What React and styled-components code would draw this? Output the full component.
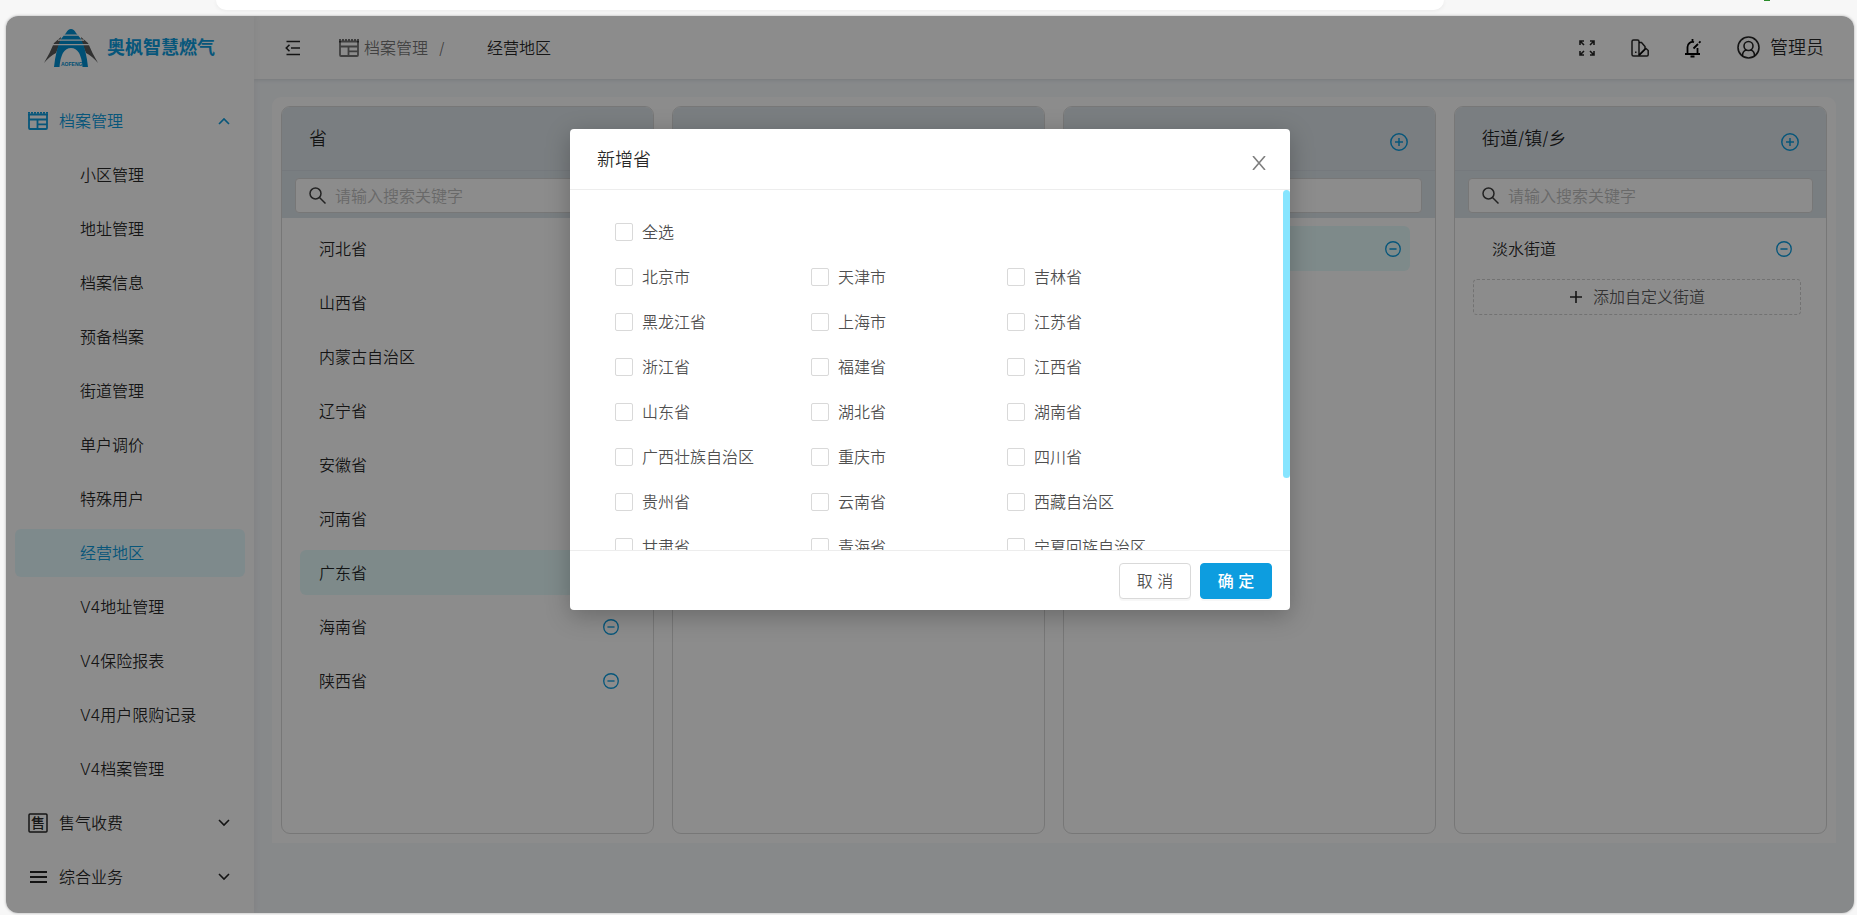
import React, { useState } from 'react'
import styled, { createGlobalStyle } from 'styled-components'

const GlobalStyle = createGlobalStyle`
    *, *::before, *::after{
        box-sizing: border-box;
    }
    html, body, #root{
        height: 100%;
    }
    body{
        margin: 0;
        overflow: hidden;
        background: #f7f7f7;
        font-family: Inter, "Noto Sans CJK SC", sans-serif;
        font-size: 16px;
        font-weight: 350;
        line-height: 24px;
        color: #000000d9;
    }
    button, input{
        font: inherit;
        color: inherit;
    }
    button{
        padding: 0;
        border: 0;
        background: none;
        cursor: pointer;
    }
    ul{
        margin: 0;
        padding: 0;
        list-style: none;
    }
    svg{
        display: block;
    }
`;

const Browser = styled.div`
    display: flex;
    flex-direction: column;
    height: 100vh;
    padding: 0 3px 2px 6px;
`;

const Toolbar = styled.div`
    display: flex;
    justify-content: space-between;
    flex: none;
    height: 16px;
    padding: 0 84px 0 210px;
`;

const AddressBar = styled.div`
    width: 79%;
    height: 10px;
    background: white;
    border-radius: 0 0 24px 24px;
    box-shadow: 0 1px 4px rgba(0,0,0,0.06);
`;

const StatusDot = styled.span`
    width: 6px;
    height: 1px;
    background: #2a8c2a;
`;

const Window = styled.div`
    position: relative;
    display: flex;
    flex: 1;
    min-height: 0;
    overflow: hidden;
    border-radius: 12px;
    background: #f6f9fc;
    box-shadow: 0 0 3px rgba(0,0,0,0.3);
`;

const Sidebar = styled.aside`
    display: flex;
    flex-direction: column;
    flex: none;
    width: 248px;
    background: white;
    box-shadow: 1px 0 6px rgba(0,21,41,0.06);
    z-index: 1;
`;

const Brand = styled.a`
    display: flex;
    align-items: center;
    gap: 9px;
    height: 63px;
    padding-left: 38px;
    color: #0d9ddf;
    font-size: 18px;
    font-weight: 700;
    text-decoration: none;
`;

const Menu = styled.nav`
    display: flex;
    flex-direction: column;
    gap: 6px;
    padding: 18px 9px 0;
`;

const MenuGroup = styled.button`
    display: flex;
    align-items: center;
    gap: 11px;
    height: 48px;
    padding: 0 15px 0 13px;
    color: ${p => p.$open ? '#0d9ddf' : 'inherit'};
    text-align: left;
`;

const GroupName = styled.span`
    flex: 1;
`;

const MenuItem = styled.a`
    display: flex;
    align-items: center;
    height: 48px;
    padding-left: 65px;
    border-radius: 6px;
    color: ${p => p.$active ? '#0d9ddf' : '#000000d9'};
    background: ${p => p.$active ? '#e6fbff' : 'none'};
    text-decoration: none;
`;

const Main = styled.div`
    display: flex;
    flex-direction: column;
    flex: 1;
    min-width: 0;
`;

const Header = styled.header`
    display: flex;
    align-items: center;
    justify-content: space-between;
    flex: none;
    height: 63px;
    padding: 0 30px 0 31px;
    background: white;
    box-shadow: 0 1px 4px rgba(0,21,41,0.12);
`;

const HeaderSide = styled.div`
    display: flex;
    align-items: center;
    gap: 35px;
`;

const Crumbs = styled.div`
    display: flex;
    align-items: center;
    gap: 5px;
    padding-left: 3px;
`;

const Crumb = styled.a`
    display: flex;
    align-items: center;
    gap: 5px;
    color: #0000008c;
    text-decoration: none;
`;

const Slash = styled.span`
    width: 43px;
    margin-left: 6px;
    color: #0000008c;
`;

const User = styled.button`
    display: flex;
    align-items: center;
    gap: 10px;
    font-size: 18px;
`;

const Content = styled.main`
    padding: 18px;
`;

const Board = styled.div`
    display: grid;
    grid-template-columns: repeat(4, minmax(0, 1fr));
    gap: 18px;
    padding: 9px;
    border-radius: 9px 9px 0 0;
    background: white;
`;

const Column = styled.section`
    height: calc(100vh - 187px);
    min-height: 500px;
    border: 1px solid #d9d9d9;
    border-radius: 9px;
    overflow: hidden;
`;

const ColumnHead = styled.div`
    display: flex;
    align-items: center;
    justify-content: space-between;
    height: 64px;
    padding: 0 27px;
    border-bottom: 1px solid #d5dde3;
    background: #dfe6eb;
`;

const Title = styled.h2`
    margin: 0;
    padding-top: 1px;
    font-size: 18px;
    font-weight: 350;
`;

const SearchArea = styled.div`
    padding: 7px 13px 5px;
    background: #dde5eb;
`;

const SearchBox = styled.label`
    display: flex;
    align-items: center;
    gap: 9px;
    height: 35px;
    padding: 0 13px;
    border: 1px solid #d9d9d9;
    border-radius: 4px;
    background: white;
`;

const SearchInput = styled.input`
    flex: 1;
    min-width: 0;
    padding: 0;
    border: 0;
    outline: 0;
    background: none;
    &::placeholder{
        color: #bfbfbf;
        opacity: 1;
    }
`;

const List = styled.ul`
    display: flex;
    flex-direction: column;
    gap: 9px;
    padding: 8px 25px 0 18px;
`;

const Region = styled.li`
    display: flex;
    align-items: center;
    justify-content: space-between;
    height: 45px;
    padding: 0 9px 0 19px;
    border-radius: 6px;
    background: ${p => p.$active ? '#e6fbfc' : 'none'};
`;

const RoundButton = styled.button`
    color: #0d9ddf;
`;

const AddButton = styled(RoundButton)`
    padding-top: 6px;
`;

const AddCustom = styled.button`
    display: flex;
    align-items: center;
    justify-content: center;
    gap: 10px;
    width: calc(100% - 43px);
    height: 36px;
    margin: 8px 0 0 18px;
    border: 1px dashed #d0d0d0;
    border-radius: 4px;
    color: #000000a6;
`;

const Mask = styled.div`
    position: absolute;
    inset: 0;
    display: flex;
    justify-content: center;
    align-items: flex-start;
    padding-top: 113px;
    background: rgba(0,0,0,0.45);
    z-index: 2;
`;

const Modal = styled.div`
    width: 720px;
    border-radius: 4px;
    background: white;
    box-shadow: 0 6px 24px rgba(0,0,0,0.25);
`;

const ModalHead = styled.div`
    display: flex;
    align-items: center;
    justify-content: space-between;
    height: 61px;
    padding: 0 24px 0 27px;
    border-bottom: 1px solid #ededed;
`;

const CloseButton = styled.button`
    padding-top: 8px;
    color: #00000080;
`;

const ModalBody = styled.div`
    position: relative;
`;

const ScrollArea = styled.div`
    height: 360px;
    padding: 19px 45px 0;
    overflow-y: auto;
    scrollbar-width: none;
`;

const Thumb = styled.div`
    position: absolute;
    top: 0;
    right: 0;
    width: 7px;
    height: 80%;
    border-radius: 4px;
    background: #87e5ff;
`;

const Options = styled.div`
    display: grid;
    grid-template-columns: repeat(3, 196px);
    grid-auto-rows: 45px;
    align-items: center;
    padding-bottom: 26px;
`;

const Option = styled.label`
    display: flex;
    align-items: center;
    gap: 9px;
    grid-column: ${p => p.$all ? '1 / -1' : 'auto'};
    color: #000000b3;
`;

const Checkbox = styled.input`
    appearance: none;
    width: 18px;
    height: 18px;
    margin: 0;
    border: 1px solid #d9d9d9;
    border-radius: 2px;
    background: white;
    &:checked{
        border-color: #0d9ddf;
        background: #0d9ddf;
    }
`;

const ModalFoot = styled.div`
    display: flex;
    justify-content: flex-end;
    gap: 9px;
    padding: 12px 18px 11px;
    border-top: 1px solid #ededed;
`;

const FootButton = styled.button`
    width: 72px;
    height: 36px;
    border: 1px solid ${p => p.$primary ? '#0d9ddf' : '#d9d9d9'};
    border-radius: 4px;
    background: ${p => p.$primary ? '#0d9ddf' : 'white'};
    color: ${p => p.$primary ? 'white' : '#000000b3'};
    font-weight: ${p => p.$primary ? 500 : 350};
    box-shadow: 0 2px 0 rgba(0,0,0,0.03);
`;

const Logo = () => (
    <svg width="54" height="38" viewBox="0 0 54 38">
        <path d="M17 8L10 14Q6 24 0 34Q6 27 12 24L16 14ZM37 8L44 14Q48 24 54 34Q48 27 42 24L38 14Z" fill="#595959" />
        <path d="M27 0Q30 0 32 4L37 10Q42 20 44 38H38.500Q37 19 27 19Q17 19 15.500 38H10Q12 20 17 10L22 4Q24 0 27 0Z" fill="#0090d3" />
        <path d="M20 6.200H34M14 11.200H40M9 15.700H45" stroke="white" strokeWidth="1.2" />
        <text x="17" y="37" fontSize="5" fontWeight="700" fontFamily="Liberation Sans" fill="#0090d3">AOFENG</text>
    </svg>
)

const ArchiveIcon = () => (
    <svg width="20" height="18" viewBox="0 0 20 18" fill="none" stroke="currentColor" strokeWidth="1.8">
        <path d="M1 2V16a1 1 0 0 0 1 1h16a1 1 0 0 0 1-1V2M1 7.500h18M9.500 7.500V17M9.500 12.300H19" />
        <path d="M0 2.500h20" strokeWidth="1.8" />
        <path d="M0 .900h20" strokeWidth="1.6" strokeDasharray="2 1" />
    </svg>
)

const SellIcon = () => (
    <svg width="20" height="20" viewBox="0 0 20 20">
        <rect x="1" y="1" width="18" height="18" rx="1" fill="none" stroke="currentColor" strokeWidth="1.5" />
        <text x="10" y="15" textAnchor="middle" fontSize="14" fontWeight="500" fill="currentColor">售</text>
    </svg>
)

const LinesIcon = () => (
    <svg width="20" height="14" viewBox="0 0 20 14" stroke="currentColor" strokeWidth="2">
        <path d="M2 2h17M2 7h17M2 12h17" />
    </svg>
)

const Chevron = ({up}) => (
    <svg width="12" height="8" viewBox="0 0 12 8" fill="none" stroke="currentColor" strokeWidth="1.6">
        <path d={up ? 'M1 7l5-5 5 5' : 'M1 1l5 5 5-5'} />
    </svg>
)

const FoldIcon = () => (
    <svg width="16" height="16" viewBox="0 0 16 16" fill="none" stroke="currentColor" strokeWidth="1.6">
        <path d="M1.500 1.500H15M6 8H15M1.500 14.500H15M4.500 4.800L1.300 8l3.200 3.200" />
    </svg>
)

const FullIcon = () => (
    <svg width="18" height="18" viewBox="0 0 18 18" fill="none" stroke="currentColor" strokeWidth="1.6">
        <path d="M2 6V2h4M2 2l4 4M12 2h4v4M16 2l-4 4M2 12v4h4M2 16l4-4M12 16h4v-4M16 16l-4-4" />
    </svg>
)

const SwatchIcon = () => (
    <svg width="18" height="18" viewBox="0 0 18 18" fill="none" stroke="currentColor" strokeWidth="1.5">
        <path d="M7.500 17H2.500A1.500 1.500 0 0 1 1 15.500v-13A1.500 1.500 0 0 1 2.500 1h4A1.500 1.500 0 0 1 8 2.500V17h8a1.200 1.200 0 0 0 1.200-1.200v-4.300L15 9.500l-7 7" />
        <path d="M8 3.500h2.500L14 7.500v2.500M8 16l6-6" />
        <path d="M4 13.200h1.500" />
    </svg>
)

const BellIcon = () => (
    <svg width="18" height="20" viewBox="0 0 18 20" fill="none" stroke="#000000" strokeWidth="1.8">
        <path d="M1 16h15M3.500 16V9a5 5 0 0 1 6.500-4.800M13.500 10v6M8.500 1v3M9.500 10.500l4.500-4.500M15 4.800l1.500-1.500" />
        <path d="M6.500 18.500h4" strokeWidth="2" />
    </svg>
)

const UserIcon = () => (
    <svg width="23" height="23" viewBox="0 0 23 23" fill="none" stroke="currentColor" strokeWidth="1.6">
        <circle cx="11.500" cy="11.500" r="10.500" />
        <circle cx="11.500" cy="10" r="4.500" />
        <path d="M5.500 19.500c0-3 2-5 4-5.500M17.500 19.500c0-3-2-5-4-5.500" />
    </svg>
)

const SearchIcon = () => (
    <svg width="17" height="17" viewBox="0 0 17 17" fill="none" stroke="#404040" strokeWidth="1.5">
        <circle cx="6.500" cy="6.500" r="5.500" />
        <path d="M10.500 10.500l6 6" />
    </svg>
)

const CircleIcon = ({size, plus}) => (
    <svg width={size} height={size} viewBox="0 0 18 18" fill="none" stroke="currentColor" strokeWidth="1.5">
        <circle cx="9" cy="9" r="8.200" />
        <path d={plus ? 'M5 9h8M9 5v8' : 'M5 9h8'} />
    </svg>
)

const PlusIcon = () => (
    <svg width="14" height="14" viewBox="0 0 14 14" stroke="#000000d9" strokeWidth="1.6">
        <path d="M1 7h12M7 1v12" />
    </svg>
)

const CloseIcon = () => (
    <svg width="14" height="14" viewBox="0 0 14 14" fill="none" stroke="currentColor" strokeWidth="1.6">
        <path d="M1 0l12 14M13 0L1 14" />
    </svg>
)

const menuItems = [
    '小区管理', '地址管理', '档案信息', '预备档案', '街道管理', '单户调价',
    '特殊用户', '经营地区', 'V4地址管理', 'V4保险报表', 'V4用户限购记录', 'V4档案管理',
]

const columns = [
    {
        title: '省',
        active: '广东省',
        items: ['河北省', '山西省', '内蒙古自治区', '辽宁省', '安徽省', '河南省', '广东省', '海南省', '陕西省'],
    },
    {title: '市', active: '惠州市', items: ['惠州市']},
    {title: '区/县', active: '惠阳区', items: ['惠阳区']},
    {title: '街道/镇/乡', items: ['淡水街道'], custom: '添加自定义街道'},
]

const provinces = [
    '北京市', '天津市', '吉林省', '黑龙江省', '上海市', '江苏省', '浙江省', '福建省', '江西省',
    '山东省', '湖北省', '湖南省', '广西壮族自治区', '重庆市', '四川省', '贵州省', '云南省', '西藏自治区',
    '甘肃省', '青海省', '宁夏回族自治区', '新疆维吾尔自治区', '台湾省', '香港特别行政区',
]

const RegionColumn = ({data}) => (
    <Column>
        <ColumnHead>
            <Title>{data.title}</Title>
            <AddButton aria-label={'新增' + data.title}><CircleIcon size={18} plus /></AddButton>
        </ColumnHead>
        <SearchArea>
            <SearchBox>
                <SearchIcon />
                <SearchInput type="text" aria-label={data.title} placeholder="请输入搜索关键字" />
            </SearchBox>
        </SearchArea>
        <List>
            {data.items.map(e => (
                <Region key={e} $active={e === data.active}>
                    {e}
                    <RoundButton aria-label={'删除' + e}><CircleIcon size={16} /></RoundButton>
                </Region>
            ))}
        </List>
        {data.custom && <AddCustom><PlusIcon />{data.custom}</AddCustom>}
    </Column>
)

export default function App(){
    const [checked, setChecked] = useState([])
    const [open, setOpen] = useState(true)
    const [scroll, setScroll] = useState(0)

    const toggle = (name) => {
        setChecked(checked.includes(name) ? checked.filter(e => e !== name) : [...checked, name])
    }

    const toggleAll = (e) => {
        setChecked(e.target.checked ? provinces : [])
    }

    const onScroll = (e) => {
        const {scrollTop, clientHeight, scrollHeight} = e.target
        setScroll(scrollTop * clientHeight / scrollHeight)
    }

    return(
        <Browser>
            <GlobalStyle />
            <Toolbar>
                <AddressBar />
                <StatusDot />
            </Toolbar>
            <Window>
                <Sidebar>
                    <Brand href="#"><Logo />奥枫智慧燃气</Brand>
                    <Menu>
                        <MenuGroup $open><ArchiveIcon /><GroupName>档案管理</GroupName><Chevron up /></MenuGroup>
                        {menuItems.map(e => (
                            <MenuItem key={e} href="#" $active={e === '经营地区'}>{e}</MenuItem>
                        ))}
                        <MenuGroup><SellIcon /><GroupName>售气收费</GroupName><Chevron /></MenuGroup>
                        <MenuGroup><LinesIcon /><GroupName>综合业务</GroupName><Chevron /></MenuGroup>
                    </Menu>
                </Sidebar>
                <Main>
                    <Header>
                        <HeaderSide>
                            <button aria-label="收起菜单"><FoldIcon /></button>
                            <Crumbs>
                                <Crumb href="#"><ArchiveIcon />档案管理</Crumb>
                                <Slash>/</Slash>
                                <span>经营地区</span>
                            </Crumbs>
                        </HeaderSide>
                        <HeaderSide>
                            <button aria-label="全屏"><FullIcon /></button>
                            <button aria-label="主题"><SwatchIcon /></button>
                            <button aria-label="通知"><BellIcon /></button>
                            <User><UserIcon />管理员</User>
                        </HeaderSide>
                    </Header>
                    <Content>
                        <Board>
                            {columns.map(e => <RegionColumn key={e.title} data={e} />)}
                        </Board>
                    </Content>
                </Main>
                {open && (
                    <Mask>
                        <Modal role="dialog" aria-label="新增省">
                            <ModalHead>
                                <Title>新增省</Title>
                                <CloseButton aria-label="关闭" onClick={() => setOpen(false)}><CloseIcon /></CloseButton>
                            </ModalHead>
                            <ModalBody>
                                <ScrollArea onScroll={onScroll}>
                                    <Options>
                                        <Option $all>
                                            <Checkbox type="checkbox" checked={checked.length === provinces.length} onChange={toggleAll} />
                                            全选
                                        </Option>
                                        {provinces.map(e => (
                                            <Option key={e}>
                                                <Checkbox type="checkbox" checked={checked.includes(e)} onChange={() => toggle(e)} />
                                                {e}
                                            </Option>
                                        ))}
                                    </Options>
                                </ScrollArea>
                                <Thumb style={{transform: `translateY(${scroll}px)`}} />
                            </ModalBody>
                            <ModalFoot>
                                <FootButton onClick={() => setOpen(false)}>取 消</FootButton>
                                <FootButton $primary onClick={() => setOpen(false)}>确 定</FootButton>
                            </ModalFoot>
                        </Modal>
                    </Mask>
                )}
            </Window>
        </Browser>
    );
}
